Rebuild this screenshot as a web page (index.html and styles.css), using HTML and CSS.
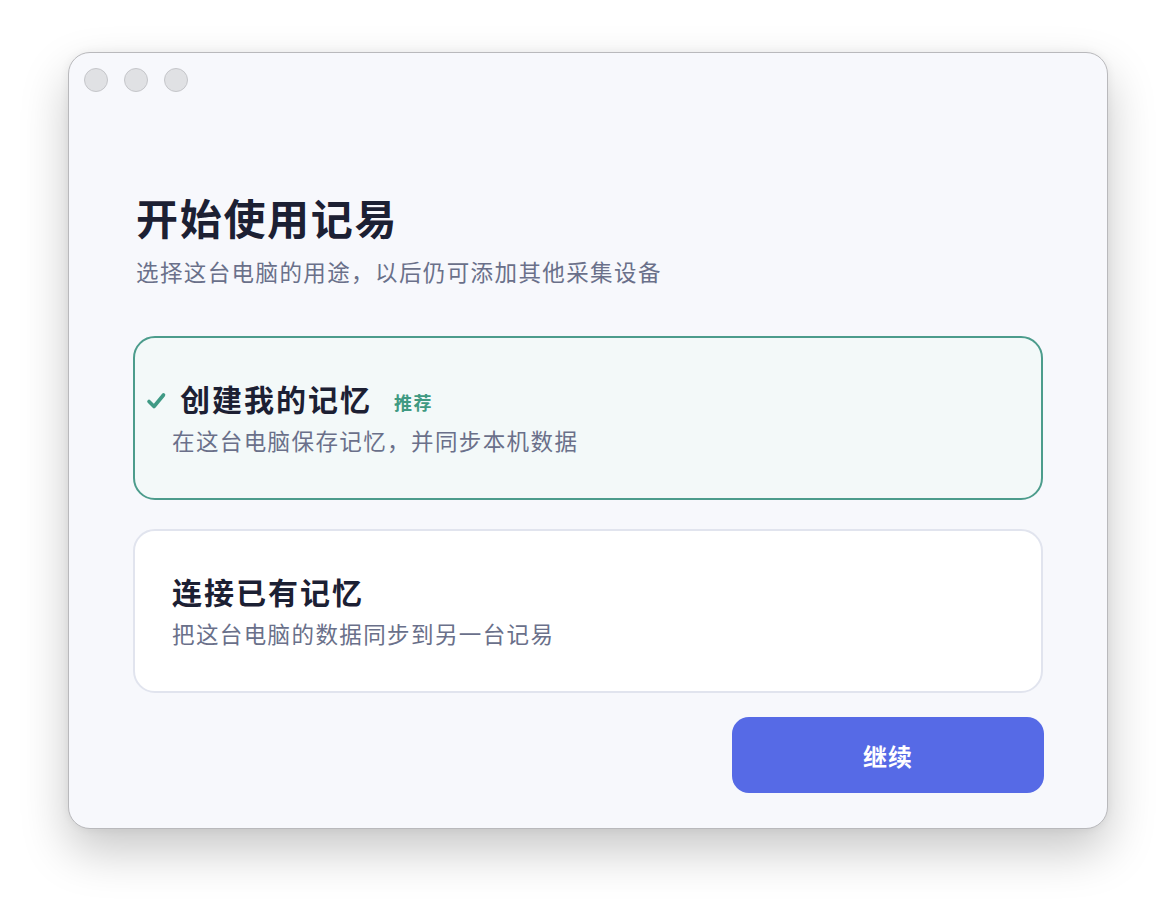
FILE: index.html
```html
<!DOCTYPE html>
<html lang="zh-CN">
<head>
<meta charset="utf-8">
<title>开始使用记易</title>
<link rel="stylesheet" href="styles.css">
</head>
<body>
<div class="window">
  <div class="titlebar">
    <span class="light"></span>
    <span class="light"></span>
    <span class="light"></span>
  </div>
  <main class="content">
    <header class="intro">
      <h1 class="title">开始使用记易</h1>
      <p class="subtitle">选择这台电脑的用途，以后仍可添加其他采集设备</p>
    </header>
    <div class="options">
      <div class="option selected">
        <div class="option-head">
          <svg class="check" viewBox="0 0 22 22" width="22" height="22"><path d="M4 11.5 L9 16.5 L18.5 5" fill="none" stroke="#3f9a85" stroke-width="3.6" stroke-linecap="round" stroke-linejoin="round"/></svg>
          <span class="option-title">创建我的记忆</span>
          <span class="badge">推荐</span>
        </div>
        <div class="option-desc">在这台电脑保存记忆，并同步本机数据</div>
      </div>
      <div class="option">
        <div class="option-head">
          <span class="option-title">连接已有记忆</span>
        </div>
        <div class="option-desc">把这台电脑的数据同步到另一台记易</div>
      </div>
    </div>
    <div class="actions">
      <button class="primary">继续</button>
    </div>
  </main>
</div>
</body>
</html>
```

FILE: styles.css
```css
* { box-sizing: border-box; }
html, body {
  margin: 0;
  padding: 0;
  background: #ffffff;
  font-family: "Noto Sans CJK SC", "Inter", sans-serif;
}
body {
  padding: 52px 0 0 68px;
  width: 1176px;
  height: 912px;
  overflow: hidden;
}
.window {
  width: 1040px;
  height: 777px;
  background: #f7f8fc;
  border: 1px solid #b9b9bc;
  border-radius: 22px;
  box-shadow: 0 22px 48px rgba(0, 0, 0, 0.22), 0 0 10px rgba(0, 0, 0, 0.06);
  display: flex;
  flex-direction: column;
}
.titlebar {
  display: flex;
  gap: 16px;
  padding: 15px 15px 0;
  height: 39px;
}
.light {
  width: 24px;
  height: 24px;
  border-radius: 50%;
  background: #e0e1e4;
  border: 1px solid #c5c6ca;
}
.content {
  flex: 1;
  padding: 99px 64px 0;
  display: flex;
  flex-direction: column;
}
.intro {
  padding-left: 3px;
}
.title {
  margin: 0;
  font-size: 42px;
  line-height: 52px;
  font-weight: 700;
  letter-spacing: 1.7px;
  color: #1c2033;
}
.subtitle {
  margin: 12px 0 0;
  font-size: 22.5px;
  line-height: 32px;
  letter-spacing: 1.4px;
  color: #6a708a;
}
.options {
  margin-top: 49px;
  display: flex;
  flex-direction: column;
  gap: 29px;
}
.option {
  height: 164px;
  border: 2px solid #e1e4ee;
  border-radius: 22px;
  background: #ffffff;
  padding: 0 37px;
  display: flex;
  flex-direction: column;
  justify-content: center;
  gap: 8px;
}
.option.selected {
  border-color: #4c9c8c;
  background: #f3f9f9;
}
.option-head {
  display: flex;
  align-items: center;
  height: 36px;
}
.check {
  margin-left: -27px;
  margin-right: 13px;
  margin-top: 6px;
  flex: none;
}
.option-title {
  font-size: 30px;
  line-height: 36px;
  font-weight: 700;
  letter-spacing: 2px;
  color: #1c2033;
}
.badge {
  margin-left: 22px;
  margin-top: 7px;
  font-size: 18px;
  font-weight: 700;
  letter-spacing: 1.4px;
  color: #3f9a82;
}
.option-desc {
  font-size: 22.5px;
  line-height: 32px;
  letter-spacing: 1.4px;
  color: #6a708a;
}
.actions {
  display: flex;
  justify-content: flex-end;
  margin-top: 24px;
  margin-right: -1px;
}
.primary {
  width: 312px;
  height: 76px;
  border: none;
  border-radius: 17px;
  background: #566ae6;
  color: #ffffff;
  font-family: "Noto Sans CJK SC", "Inter", sans-serif;
  font-size: 24px;
  font-weight: 700;
  letter-spacing: 1px;
}
```
